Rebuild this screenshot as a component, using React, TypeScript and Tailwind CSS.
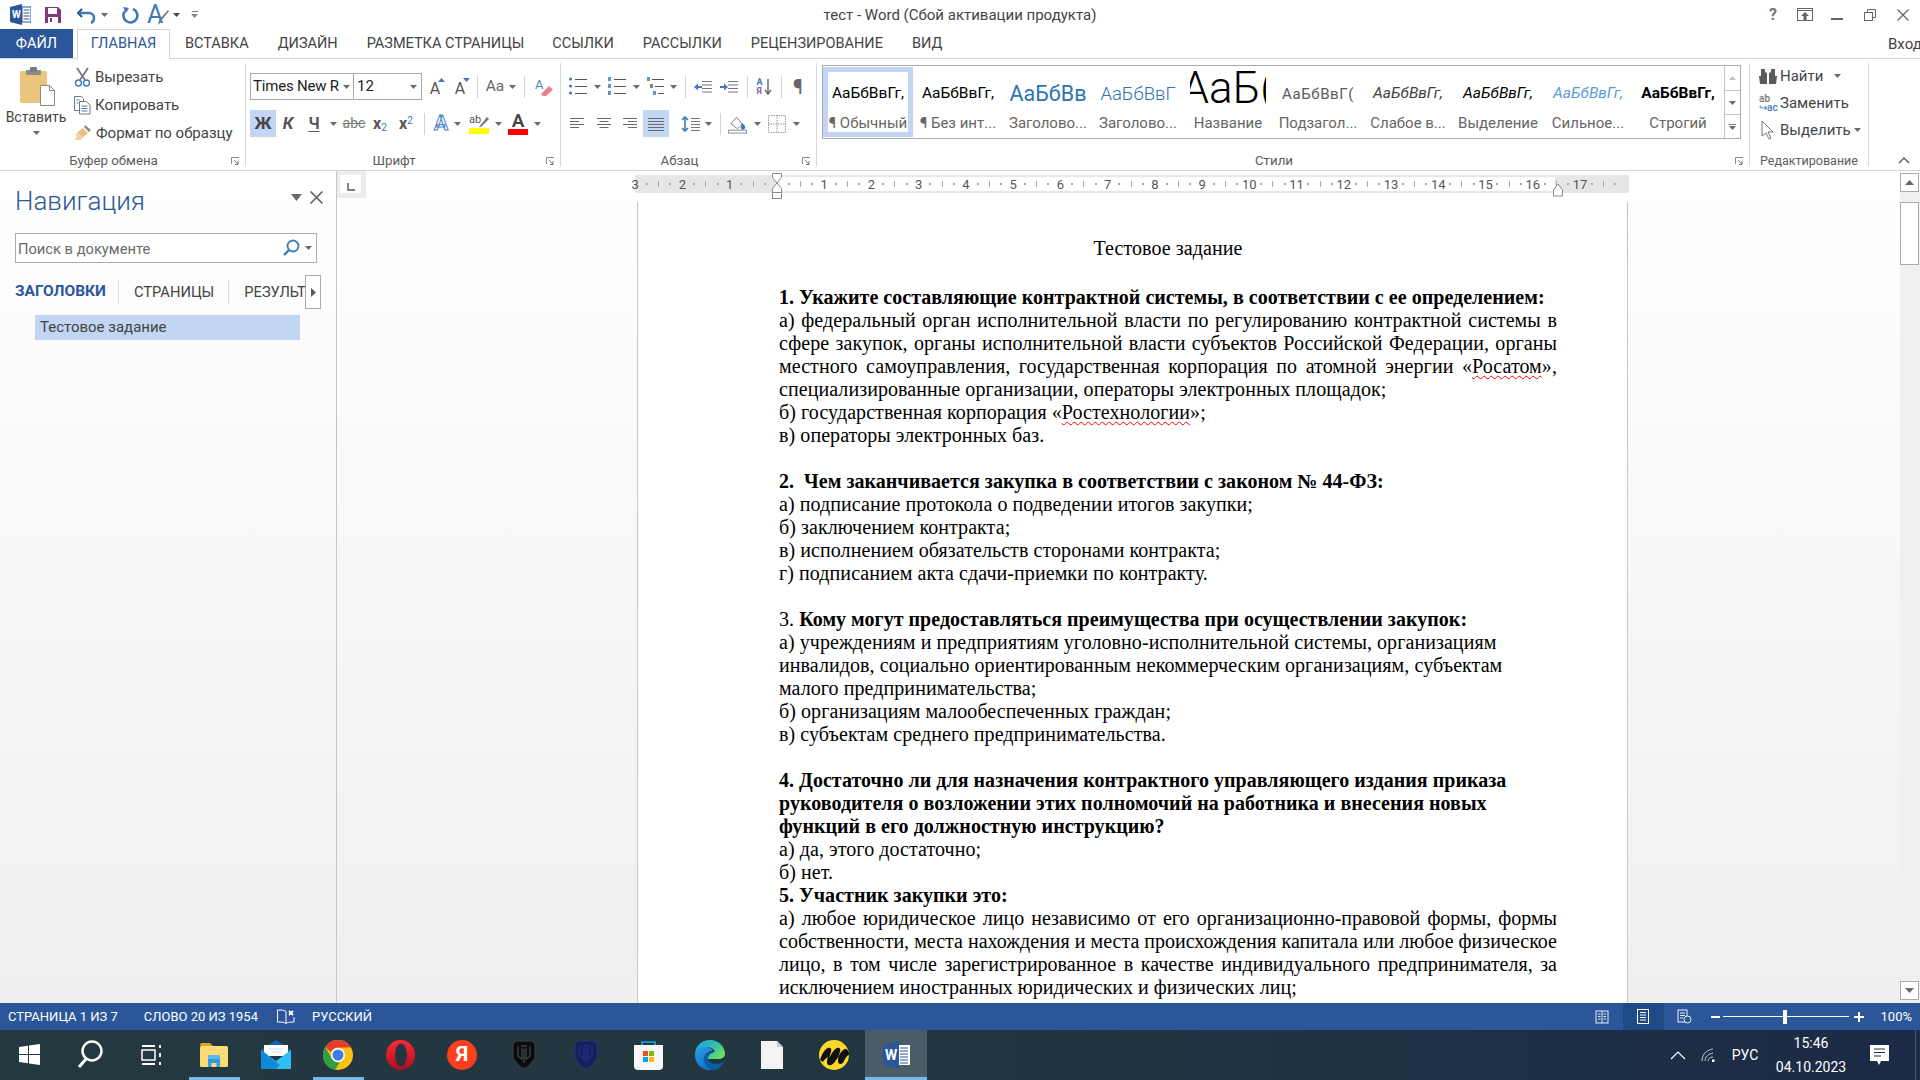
import React from "react";

const Caret = ({ c = "#6a6a6a" }: { c?: string }) => (
  <svg width="7" height="4" viewBox="0 0 7 4"><path d="M0 0h7L3.5 4z" fill={c} /></svg>
);
const CaretCell = ({ cls = "" }: { cls?: string }) => (
  <div className={`flex h-[27px] w-[10px] shrink-0 items-center justify-center ${cls}`}><Caret /></div>
);
const VSep = ({ cls = "" }: { cls?: string }) => <div className={`h-[22px] w-px shrink-0 self-center bg-[#d4d4d4] ${cls}`} />;
const Launcher = () => (
  <svg width="9" height="9" viewBox="0 0 9 9" className="absolute right-[5px] top-[4px]">
    <path d="M.5 7V.5H8" fill="none" stroke="#8a8a8a" /><path d="M3 3l4 4M7 4v3.5H4" fill="none" stroke="#777" />
  </svg>
);

function Group({ w, label, children, noLauncher }: { w: string; label: string; children: React.ReactNode; noLauncher?: boolean }) {
  return (
    <div className={`flex shrink-0 py-[4px] ${w}`}>
      <div className="flex h-[103px] w-full flex-col border-r border-[#d9d9d9]">
        <div className="flex-1 overflow-visible">{children}</div>
        <div className={`relative -mb-[3px] flex h-[16px] items-center justify-center leading-none text-[#5c5c5c] ${noLauncher ? "text-[12.5px]" : "pr-[18px] text-[13.3px]"}`}>
          {label}
          {!noLauncher && <Launcher />}
        </div>
      </div>
    </div>
  );
}

const Cell = ({ w = "w-[20px]", cls = "", children }: { w?: string; cls?: string; children: React.ReactNode }) => (
  <div className={`flex h-[27px] shrink-0 items-center justify-center ${w} ${cls}`}>{children}</div>
);

/* ---- ribbon glyphs ---- */
const Lines = ({ xs, w = 16 }: { xs: number[][]; w?: number }) => (
  <svg width={w} height="16" viewBox={`0 0 ${w} 16`}>
    {xs.map((l, i) => (
      <rect key={i} x={l[0]} y={l[2]} width={l[1]} height="1" fill="#6a6a6a" />
    ))}
  </svg>
);
const Bullets = ({ kind }: { kind: "b" | "n" | "m" }) => (
  <svg width="20" height="19" viewBox="0 0 20 19">
    {[2, 9, 16].map((y, i) => (
      <g key={y}>
        {kind === "b" && <circle cx="2.5" cy={y} r="1.5" fill="#3f79b8" />}
        {kind === "n" && <rect x="1" y={y - 2} width="3" height="4" fill="#3f79b8" opacity=".8" />}
        {kind === "m" && <rect x={1 + i * 3} y={y - 2} width="3" height="4" fill={i === 1 ? "#666" : "#3f79b8"} opacity=".8" />}
        <rect x={kind === "m" ? 6 + i * 3 : 7} y={y} width={kind === "m" ? 12 - i * 3 : 12} height="1" fill="#555" />
      </g>
    ))}
  </svg>
);
const Indent = ({ dir }: { dir: "l" | "r" }) => (
  <svg width="18" height="14" viewBox="0 0 18 14">
    {[1, 4.5, 8, 11.5].map((y) => <rect key={y} x="8" y={y} width="10" height="1" fill="#777" />)}
    <path d={dir === "l" ? "M0 7l4-3.5V6h4v2H4v2.5z" : "M8 7L4 3.5V6H0v2h4v2.5z"} fill="#3f79b8" />
  </svg>
);

function Paste() {
  return (
    <svg width="36" height="40" viewBox="0 0 36 40">
      <rect x="0" y="4" width="27" height="32" rx="1.5" fill="#ecc57c" />
      <rect x="6" y="3" width="15" height="5" fill="#8b8b8b" />
      <rect x="10" y="0" width="7" height="5" rx="1" fill="#7b7b7b" />
      <path d="M20.5 18.5h9l5 5v15h-14z" fill="#fff" stroke="#8b8b8b" />
      <path d="M29.5 18.5v5h5" fill="none" stroke="#8b8b8b" />
    </svg>
  );
}
const Scissors = () => (
  <svg width="17" height="20" viewBox="0 0 17 20">
    <path d="M3 1l8 12M14 1L6 13" stroke="#777" strokeWidth="1.8" fill="none" />
    <circle cx="4.5" cy="16" r="3" fill="none" stroke="#3f79b8" strokeWidth="1.4" />
    <circle cx="12.5" cy="16" r="3" fill="none" stroke="#3f79b8" strokeWidth="1.4" />
  </svg>
);
const Copy = () => (
  <svg width="17" height="20" viewBox="0 0 17 20">
    <path d="M.5 1.5h7l2 2v3M5 15.5H.5z M.5 1.5v14" fill="none" stroke="#777" />
    <path d="M5.5 6.5h7l3.5 3.5v9H5.5z" fill="#fff" stroke="#777" />
    <path d="M7.5 11h6M7.5 13.5h6M7.5 16h6M2.5 5h3M2.5 8h2" stroke="#3f79b8" />
  </svg>
);
const Painter = () => (
  <svg width="18" height="18" viewBox="0 0 18 18">
    <path d="M11 1l6 5-2 2-5-5z" fill="#8a8a8a" />
    <path d="M9 4l5 5-5 4-5-5z" fill="#e8c27e" />
    <path d="M4 8l5 5-3 3-5-1 3-3-2-1z" fill="#efd6a3" stroke="#d0a860" strokeWidth=".4" />
  </svg>
);

function FontAIcon({ up }: { up: boolean }) {
  return (
    <div className="relative flex h-[20px] w-[20px] items-end justify-center text-[16px] leading-none text-[#555]">
      A
      <svg width="7" height="4" viewBox="0 0 7 4" className="absolute right-0 top-[1px]">
        <path d={up ? "M0 4h7L3.5 0z" : "M0 0h7L3.5 4z"} fill="#3f79b8" />
      </svg>
    </div>
  );
}

function Gallery() {
  const items: { s: string; cls: string; label: string }[] = [
    { s: "АаБбВвГг,", cls: "text-[15.5px] text-black", label: "¶ Обычный" },
    { s: "АаБбВвГг,", cls: "text-[15.5px] text-black", label: "¶ Без инт..." },
    { s: "АаБбВв", cls: "text-[21.5px] text-[#2e74b5]", label: "Заголово..." },
    { s: "АаБбВвГ", cls: "text-[18.5px] text-[#2e74b5] font-light", label: "Заголово..." },
    { s: "АаБ(", cls: "text-[44px] font-light text-black -mt-[6px] mb-[6px]", label: "Название" },
    { s: "АаБбВвГ(", cls: "text-[15px] tracking-[.6px] text-[#5a5a5a]", label: "Подзагол..." },
    { s: "АаБбВвГг,", cls: "text-[15.5px] italic text-[#404040]", label: "Слабое в..." },
    { s: "АаБбВвГг,", cls: "text-[15.5px] italic text-black", label: "Выделение" },
    { s: "АаБбВвГг,", cls: "text-[15.5px] italic text-[#5b9bd5]", label: "Сильное..." },
    { s: "АаБбВвГг,", cls: "text-[15.5px] font-bold text-black", label: "Строгий" },
  ];
  return (
    <div className="ml-[5px] mt-[2px] flex h-[74px] w-[919px] border border-[#ababab]">
      <div className="flex w-[901px] pt-[1px]">
        {items.map((it, i) => (
          <div
            key={i}
            className={`flex h-[70px] w-[90px] shrink-0 flex-col items-center pt-[4px] ${i === 0 ? "border-[5px] border-[#c2d5f2]" : "border-[5px] border-transparent"}`}
          >
            <div className={`flex h-[36px] w-[76px] shrink-0 items-center justify-center overflow-hidden whitespace-nowrap leading-none ${it.cls}`}>
              {it.s}
            </div>
            <div className="mt-[2px] flex h-[18px] items-center whitespace-nowrap text-[15px] leading-none text-[#666]">{it.label}</div>
          </div>
        ))}
      </div>
      <div className="flex w-[16px] flex-col border-l border-[#c6c6c6]">
        <div className="flex h-[25px] items-center justify-center border-b border-[#c6c6c6]"><svg width="7" height="4"><path d="M0 4h7L3.5 0z" fill="#c0c0c0" /></svg></div>
        <div className="flex h-[24px] items-center justify-center border-b border-[#c6c6c6]"><Caret /></div>
        <div className="flex flex-1 flex-col items-center justify-center gap-[1px]"><div className="h-px w-[7px] bg-[#777]" /><Caret /></div>
      </div>
    </div>
  );
}

function Ribbon() {
  return (
    <div className="flex h-[112px] shrink-0 border-b border-[#d4d4d4] bg-white text-[15px] text-[#444]">
      <Group w="w-[246px]" label="Буфер обмена">
        <div className="flex">
          <div className="flex w-[72px] flex-col items-center">
            <div className="ml-[4px] mt-[4px]"><Paste /></div>
            <div className="mt-[1px] text-[14px] leading-[18px]">Вставить</div>
            <div className="mt-[5px]"><Caret /></div>
          </div>
          <div className="flex flex-col gap-[6px] pt-[3px]">
            <div className="flex h-[22px] items-center gap-[4px] pl-[2px]"><Scissors /><span>Вырезать</span></div>
            <div className="flex h-[22px] items-center gap-[4px] pl-[2px]"><Copy /><span>Копировать</span></div>
            <div className="flex h-[22px] items-center gap-[4px] pl-[2px]"><Painter /><span>Формат по образцу</span></div>
          </div>
        </div>
      </Group>

      <Group w="w-[315px]" label="Шрифт">
        <div className="flex flex-col gap-[10px] pt-[10px]">
          <div className="flex items-center pl-[4px]">
            <div className="flex h-[27px] w-[104px] items-center justify-between border border-[#ababab] pl-[2px] pr-[3px] text-[15px] leading-none tracking-[-.2px] text-[#222]">
              <span className="w-[87px] overflow-hidden whitespace-nowrap">Times New R</span><Caret />
            </div>
            <div className="-ml-px flex h-[27px] w-[69px] items-center justify-between border border-[#ababab] pl-[3px] pr-[4px] text-[15px] leading-none text-[#222]">
              <span>12</span><Caret />
            </div>
            <Cell w="w-[24px]" cls="ml-[1px]"><FontAIcon up /></Cell>
            <Cell w="w-[24px]" cls="ml-[1px]"><FontAIcon up={false} /></Cell>
            <VSep cls="ml-[5px]" />
            <Cell w="w-[24px]" cls="ml-[5px]"><span className="text-[15.5px] text-[#666]">Aa</span></Cell>
            <CaretCell />
            <VSep cls="ml-[7px]" />
            <Cell w="w-[24px]" cls="ml-[7px]">
              <svg width="20" height="20" viewBox="0 0 20 20">
                <text x="1" y="12" fontSize="13" fill="#5a7fb0" fontFamily="Roboto">A</text>
                <path d="M7 17l8-8 4 3.5-7 6.5H9z" fill="#ec7f8a" />
              </svg>
            </Cell>
          </div>
          <div className="flex items-center pl-[4px]">
            <Cell w="w-[26px]" cls="bg-[#c2d5f2]"><span className="text-[17px] font-bold text-[#444]">Ж</span></Cell>
            <Cell w="w-[24px]"><span className="text-[17px] font-bold italic text-[#555]">К</span></Cell>
            <Cell w="w-[24px]" cls="ml-[2px]"><span className="text-[16px] font-bold leading-[17px] text-[#555] underline underline-offset-2">Ч</span></Cell>
            <CaretCell cls="ml-[2px]" />
            <Cell w="w-[24px]" cls="ml-[4px]"><span className="text-[14px] text-[#777] line-through">abc</span></Cell>
            <Cell w="w-[24px]" cls="ml-[2px]"><span className="text-[16px] font-bold text-[#555]">x<sub className="text-[10px] font-normal text-[#3f79b8]">2</sub></span></Cell>
            <Cell w="w-[24px]" cls="ml-[2px]"><span className="text-[16px] font-bold text-[#555]">x<sup className="text-[10px] font-normal text-[#3f79b8]">2</sup></span></Cell>
            <VSep cls="ml-[6px]" />
            <Cell w="w-[24px]" cls="ml-[4px]"><span className="text-[21px] font-bold leading-none text-white [-webkit-text-stroke:1px_#4a86c5]">A</span></Cell>
            <CaretCell cls="-ml-[1px]" />
            <Cell w="w-[24px]" cls="ml-[5px]">
              <div className="flex flex-col items-center">
                <svg width="20" height="15" viewBox="0 0 20 15">
                  <text x="0" y="10" fontSize="11" fill="#555" fontFamily="Roboto">ab</text>
                  <path d="M10 14l8-10 2 2-8 8z" fill="#777" />
                </svg>
                <div className="h-[6px] w-[20px] bg-[#ffff00]" />
              </div>
            </Cell>
            <CaretCell cls="ml-[2px]" />
            <Cell w="w-[24px]" cls="ml-[3px]">
              <div className="flex flex-col items-center">
                <span className="text-[19px] font-semibold leading-[17px] text-[#444]">A</span>
                <div className="h-[6px] w-[20px] bg-[#ff0000]" />
              </div>
            </Cell>
            <CaretCell cls="ml-[2px]" />
          </div>
        </div>
      </Group>

      <Group w="w-[256px]" label="Абзац">
        <div className="flex flex-col gap-[10px] pt-[10px]">
          <div className="flex items-center">
            <Cell cls="ml-[7px]"><Bullets kind="b" /></Cell>
            <CaretCell cls="ml-[4px]" />
            <Cell cls="ml-[5px]"><Bullets kind="n" /></Cell>
            <CaretCell cls="ml-[4px]" />
            <Cell cls="ml-[5px]"><Bullets kind="m" /></Cell>
            <CaretCell cls="ml-[2px]" />
            <VSep cls="ml-[7px]" />
            <Cell cls="ml-[7px]"><Indent dir="l" /></Cell>
            <Cell cls="ml-[6px]"><Indent dir="r" /></Cell>
            <VSep cls="ml-[8px]" />
            <Cell cls="ml-[6px]">
              <div className="flex items-center gap-[1px]">
                <div className="flex flex-col text-[9px] font-bold leading-[9px]"><span className="text-[#3f79b8]">А</span><span className="text-[#8a5fb0]">Я</span></div>
                <svg width="8" height="18" viewBox="0 0 8 18"><path d="M4 1v15M1 12l3 4 3-4" fill="none" stroke="#666" strokeWidth="1.4" /></svg>
              </div>
            </Cell>
            <VSep cls="ml-[7px]" />
            <Cell cls="ml-[6px]"><span className="text-[20px] leading-none text-[#666]">¶</span></Cell>
          </div>
          <div className="flex items-center">
            <Cell cls="ml-[6px]"><Lines xs={[[1, 14, 2], [1, 9, 5], [1, 14, 8], [1, 9, 11]]} /></Cell>
            <Cell cls="ml-[7px]"><Lines xs={[[1, 14, 2], [3.5, 9, 5], [1, 14, 8], [3.5, 9, 11]]} /></Cell>
            <Cell cls="ml-[6px]"><Lines xs={[[1, 14, 2], [6, 9, 5], [1, 14, 8], [6, 9, 11]]} /></Cell>
            <Cell w="w-[26px]" cls="ml-[3px] bg-[#c2d5f2]"><Lines xs={[[0, 16, 2], [0, 16, 5], [0, 16, 8], [0, 16, 11], [0, 16, 14]]} /></Cell>
            <Cell cls="ml-[12px]">
              <svg width="20" height="18" viewBox="0 0 20 18">
                <path d="M4 2v14M1 5l3-3 3 3M1 13l3 3 3-3" fill="none" stroke="#3f79b8" strokeWidth="1.6" />
                {[3, 6, 9, 12, 15].map((y) => <rect key={y} x="10" y={y} width="9" height="1" fill="#777" />)}
              </svg>
            </Cell>
            <CaretCell cls="ml-[2px]" />
            <VSep cls="ml-[7px]" />
            <Cell cls="ml-[7px]">
              <svg width="21" height="20" viewBox="0 0 21 20">
                <path d="M3 10l6-7 6 7-5 5z" fill="#fff" stroke="#777" />
                <path d="M15 9c2 2 3 3 3 4.5S17 16 15.5 16s-2-1-2-2.500z" fill="#3f79b8" />
                <rect x=".5" y="16.500" width="19" height="3" fill="#fff" stroke="#8a8a8a" />
              </svg>
            </Cell>
            <CaretCell cls="ml-[4px]" />
            <Cell cls="ml-[5px]">
              <svg width="18" height="18" viewBox="0 0 18 18">
                <rect x=".5" y=".5" width="17" height="17" fill="none" stroke="#999" strokeDasharray="1.500 1" />
                <path d="M9 0v18M0 9h18" stroke="#999" strokeDasharray="1.500 1" />
              </svg>
            </Cell>
            <CaretCell cls="ml-[4px]" />
          </div>
        </div>
      </Group>

      <Group w="w-[933px]" label="Стили">
        <Gallery />
      </Group>

      <Group w="w-[119px]" label="Редактирование" noLauncher>
        <div className="flex flex-col gap-[5px] pl-[9px] pt-[2px] text-[15px]">
          <div className="flex h-[22px] items-center gap-[3px]">
            <svg width="18" height="18" viewBox="0 0 18 18">
              <path d="M2 2h4v3l2 1v3H2zM12 2h4v7h-6V6l2-1zM0 9h8v8H1zM10 9h8l-1 8h-7z" fill="#5a5a5a" />
            </svg>
            <span>Найти</span><span className="ml-[8px]"><Caret /></span>
          </div>
          <div className="flex h-[22px] items-center gap-[1px]">
            <div className="flex w-[20px] flex-col text-[10px] font-medium leading-[9px]"><span className="text-[#777]">ab</span><span className="text-[#3f79b8]">↪ac</span></div>
            <span>Заменить</span>
          </div>
          <div className="flex h-[22px] items-center gap-[3px]">
            <svg width="18" height="20" viewBox="0 0 18 20"><path d="M3 1v15l4-3 3 6 2-1-3-6h5z" fill="#fff" stroke="#777" /></svg>
            <span>Выделить</span><Caret />
          </div>
        </div>
      </Group>

      <div className="flex flex-1 items-end justify-end pb-[6px] pr-[10px]">
        <svg width="12" height="7" viewBox="0 0 12 7"><path d="M1 6l5-5 5 5" fill="none" stroke="#555" strokeWidth="1.400" /></svg>
      </div>
    </div>
  );
}

function TitleBar() {
  return (
    <div className="relative flex h-[29px] shrink-0 items-center bg-white">
      <div className="ml-[10px]">
        <svg width="21" height="21" viewBox="0 0 21 21">
          <path d="M0 3l12-3v21L0 18z" fill="#2b579a" />
          <rect x="12" y="3" width="9" height="15" fill="#fff" stroke="#2b579a" />
          <path d="M13.500 6h6M13.500 9h6M13.500 12h6M13.500 15h6" stroke="#2b579a" />
          <text x="2" y="14" fontSize="10" fontWeight="700" fill="#fff" fontFamily="Roboto">W</text>
        </svg>
      </div>
      <svg className="ml-[14px]" width="16" height="16" viewBox="0 0 16 16">
        <path d="M0 0h13l3 3v13H0z" fill="#80397b" />
        <rect x="3" y="1" width="9" height="6" fill="#fff" />
        <rect x="3" y="10" width="10" height="6" fill="#fff" />
        <rect x="5" y="11" width="2" height="4" fill="#80397b" />
      </svg>
      <svg className="ml-[16px]" width="19" height="18" viewBox="0 0 19 18">
        <path d="M5 3l-4 4 4 4" fill="none" stroke="#2b579a" strokeWidth="2.200" />
        <path d="M2 7h10a5 5 0 0 1 5 5c0 2-1 4-3 5" fill="none" stroke="#3f79b8" strokeWidth="2.400" />
      </svg>
      <span className="ml-[5px]"><Caret /></span>
      <svg className="ml-[14px]" width="18" height="18" viewBox="0 0 18 18">
        <path d="M11 3a7 7 0 1 1-8 2" fill="none" stroke="#3f79b8" strokeWidth="2.600" />
        <path d="M1 1l6 1-3 5z" fill="#3f79b8" />
      </svg>
      <div className="relative ml-[7px] flex h-[24px] w-[20px] items-center text-[25px] leading-none text-[#3f79b8]">
        A
        <svg width="12" height="16" viewBox="0 0 12 16" className="absolute -right-[2px] bottom-[1px]"><path d="M11 0l1 1-8 10-2-1z" fill="#777" /><path d="M2 10l2 2-3 3z" fill="#3f79b8" /></svg>
      </div>
      <span className="ml-[6px]"><Caret c="#444" /></span>
      <div className="ml-[11px] flex flex-col items-center gap-[2px]"><div className="h-px w-[6px] bg-[#777]" /><Caret c="#888" /></div>
      <div className="absolute inset-x-0 top-[5px] text-center text-[15px] leading-[20px] text-[#444]">тест - Word (Сбой активации продукта)</div>
      <div className="relative ml-auto flex items-center">
        <span className="w-[14px] text-center text-[16px] font-bold leading-none text-[#777]">?</span>
        <svg className="ml-[17px]" width="16" height="13" viewBox="0 0 16 13">
          <rect x=".5" y=".5" width="15" height="12" fill="none" stroke="#666" /><path d="M0 2.500h16" stroke="#666" /><path d="M8 4l4 4H9.500v4h-3V8H4z" fill="#666" />
        </svg>
        <div className="ml-[18px] mt-[8px] h-[2px] w-[12px] bg-[#666]" />
        <svg className="ml-[21px]" width="12" height="12" viewBox="0 0 12 12">
          <path d="M3.500 3V.5h8v8H9" fill="none" stroke="#666" /><rect x=".5" y="3.500" width="8" height="8" fill="none" stroke="#666" />
        </svg>
        <svg className="ml-[21px] mr-[11px]" width="12" height="12" viewBox="0 0 12 12"><path d="M.5.5l11 11M11.500.5l-11 11" stroke="#666" strokeWidth="1.300" /></svg>
      </div>
    </div>
  );
}

function Tabs() {
  const t: [string, string][] = [
    ["ВСТАВКА", "ml-[15px]"],
    ["ДИЗАЙН", "ml-[29px]"],
    ["РАЗМЕТКА СТРАНИЦЫ", "ml-[29px]"],
    ["ССЫЛКИ", "ml-[28px]"],
    ["РАССЫЛКИ", "ml-[29px]"],
    ["РЕЦЕНЗИРОВАНИЕ", "ml-[29px]"],
    ["ВИД", "ml-[29px]"],
  ];
  return (
    <div className="flex h-[30px] shrink-0 items-stretch border-b border-[#d4d4d4] bg-white text-[14.5px] leading-none text-[#444]">
      <div className="flex w-[73px] items-center justify-center bg-[#2b579a] pt-[1px] text-white">ФАЙЛ</div>
      <div className="relative ml-[4px] flex h-[30px] w-[93px] items-center justify-center border-x border-t border-[#d4d4d4] bg-white text-[#2b579a]">ГЛАВНАЯ</div>
      {t.map(([s, m]) => (
        <div key={s} className={`flex items-center whitespace-nowrap pt-[1px] ${m}`}>{s}</div>
      ))}
      <div className="ml-auto flex w-[32px] items-center overflow-hidden whitespace-nowrap pt-[1px] text-[15px]">Вход</div>
    </div>
  );
}

function Nav() {
  return (
    <div className="flex w-[337px] shrink-0 flex-col border-r border-[#c6c6c6]">
      <div className="flex h-[62px] items-center pb-[2px] pl-[15px] pr-[13px]">
        <span className="text-[26px] font-light leading-none text-[#2b579a]">Навигация</span>
        <span className="ml-auto mr-[8px] mt-[-8px]"><svg width="11" height="7" viewBox="0 0 11 7"><path d="M0 0h11L5.500 7z" fill="#6a6a6a" /></svg></span>
        <svg className="mt-[-8px]" width="13" height="13" viewBox="0 0 13 13"><path d="M.5.5l12 12M12.500.5l-12 12" stroke="#5a5a5a" strokeWidth="1.500" /></svg>
      </div>
      <div className="ml-[15px] flex h-[30px] w-[302px] items-center border border-[#ababab] bg-white pl-[2px] pr-[4px] pt-[2px] text-[14.7px] leading-none text-[#6a6a6a]">
        <span>Поиск в документе</span>
        <svg className="ml-auto -mt-[2px]" width="18" height="18" viewBox="0 0 18 18"><circle cx="11" cy="7" r="5.500" fill="none" stroke="#3f79b8" strokeWidth="1.800" /><path d="M7 11l-5 5" stroke="#3f79b8" strokeWidth="2.400" /></svg>
        <span className="ml-[5px] -mt-[2px]"><Caret /></span>
      </div>
      <div className="ml-[15px] mt-[12px] flex h-[34px] items-center text-[14.7px] leading-none text-[#444]">
        <span className="text-[15.5px] font-bold text-[#2b579a]">ЗАГОЛОВКИ</span>
        <div className="ml-[12px] h-[24px] w-px bg-[#dcdcdc]" />
        <span className="ml-[15px]">СТРАНИЦЫ</span>
        <div className="ml-[14px] h-[24px] w-px bg-[#dcdcdc]" />
        <span className="ml-[15px] w-[65px] shrink-0 overflow-hidden whitespace-nowrap">РЕЗУЛЬТАТЫ</span>
        <div className="relative -ml-[4px] flex h-[34px] w-[16px] items-center justify-center border border-[#ababab] bg-white">
          <svg width="5" height="9" viewBox="0 0 5 9"><path d="M0 0l5 4.500L0 9z" fill="#5a5a5a" /></svg>
        </div>
      </div>
      <div className="ml-[35px] mt-[6px] flex h-[25px] w-[265px] items-center bg-[#c2d5f2] pl-[5px] text-[15px] leading-none text-[#444]">Тестовое задание</div>
    </div>
  );
}

function Ruler() {
  const cells: (number | string)[] = [3, 2, 1, "", 1, 2, 3, 4, 5, 6, 7, 8, 9, 10, 11, 12, 13, 14, 15, 16, 17];
  const Slot = ({ children }: { children?: React.ReactNode }) => (
    <div className="flex w-[11.8125px] shrink-0"><span className="flex w-0 justify-center whitespace-nowrap">{children}</span></div>
  );
  const Dot = () => <span className="h-[2px] w-[2px] shrink-0 self-center bg-[#a8a8a8]" />;
  const Tick = () => <span className="h-[6px] w-px shrink-0 self-center bg-[#a8a8a8]" />;
  return (
    <div className="relative ml-[269px] mt-[4px] h-[18px] w-[994px] shrink-0">
      <div className="flex h-[18px]">
        <div className="w-[142px] bg-[#e6e6e6]" />
        <div className="w-[778px] border-y-2 border-[#e6e6e6] bg-white" />
        <div className="w-[74px] bg-[#e6e6e6]" />
      </div>
      <div className="absolute left-[-23.6px] top-0 flex h-[18px] items-center text-[13px] leading-none text-[#555]">
        {cells.map((n, i) => (
          <div key={i} className="flex h-[18px] w-[47.25px] shrink-0 items-center">
            <Slot>{i > 0 && <Tick />}</Slot>
            <Slot>{i > 0 && <Dot />}</Slot>
            <Slot><span>{n}</span></Slot>
            <Slot><Dot /></Slot>
          </div>
        ))}
        <Slot><Tick /></Slot>
        <Slot><Dot /></Slot>
      </div>
      <svg className="absolute left-[135px] top-[-2px]" width="14" height="28" viewBox="0 0 14 28">
        <path d="M2.500.5h9v4L7 10 2.500 4.500z" fill="#fff" stroke="#8a8a8a" />
        <path d="M7 10l4.500 5.500v4h-9v-4z" fill="#fff" stroke="#8a8a8a" />
        <rect x="2.500" y="19.500" width="9" height="6" fill="#fff" stroke="#8a8a8a" />
      </svg>
      <svg className="absolute left-[916px] top-[8px]" width="14" height="15" viewBox="0 0 14 15">
        <path d="M7 1l4.500 6v6h-9V7z" fill="#fff" stroke="#8a8a8a" />
      </svg>
    </div>
  );
}

const Err = ({ children }: { children: React.ReactNode }) => (
  <span className="underline decoration-[#ff0000] decoration-wavy decoration-1 underline-offset-[2px]">{children}</span>
);

function Page() {
  return (
    <div className="ml-[300px] h-[801px] w-[991px] overflow-hidden border-x border-[#c6c6c6] bg-white pl-[141px] pr-[70px] pt-[35px] font-['Liberation_Serif',serif] text-[20px] leading-[23px] tracking-[.07px] text-black [&_b]:tracking-[.03px] [&_.font-bold]:tracking-[.03px]">
      <p className="mb-[26px] text-center">Тестовое задание</p>
      <p className="font-bold">1. Укажите составляющие контрактной системы, в соответствии с ее определением:</p>
      <p className="text-justify">а) федеральный орган исполнительной власти по регулированию контрактной системы в сфере закупок, органы исполнительной власти субъектов Российской Федерации, органы местного самоуправления, государственная корпорация по атомной энергии «<Err>Росатом</Err>», специализированные организации, операторы электронных площадок;</p>
      <p>б) государственная корпорация «<Err>Ростехнологии</Err>»;</p>
      <p>в) операторы электронных баз.</p>
      <p className="h-[23px]" />
      <p className="font-bold whitespace-pre">2.  Чем заканчивается закупка в соответствии с законом № 44-ФЗ:</p>
      <p>а) подписание протокола о подведении итогов закупки;</p>
      <p>б) заключением контракта;</p>
      <p>в) исполнением обязательств сторонами контракта;</p>
      <p>г) подписанием акта сдачи-приемки по контракту.</p>
      <p className="h-[23px]" />
      <p>3. <b>Кому могут предоставляться преимущества при осуществлении закупок:</b></p>
      <p>а) учреждениям и предприятиям уголовно-исполнительной системы, организациям инвалидов, социально ориентированным некоммерческим организациям, субъектам малого предпринимательства;</p>
      <p>б) организациям малообеспеченных граждан;</p>
      <p>в) субъектам среднего предпринимательства.</p>
      <p className="h-[23px]" />
      <p className="font-bold">4. Достаточно ли для назначения контрактного управляющего издания приказа руководителя о возложении этих полномочий на работника и внесения новых функций в его должностную инструкцию?</p>
      <p>а) да, этого достаточно;</p>
      <p>б) нет.</p>
      <p className="font-bold">5. Участник закупки это:</p>
      <p className="text-justify tracking-normal">а) любое юридическое лицо независимо от его организационно-правовой формы, формы собственности, места нахождения и места происхождения капитала или любое физическое лицо, в том числе зарегистрированное в качестве индивидуального предпринимателя, за исключением иностранных юридических и физических лиц;</p>
    </div>
  );
}

function Scrollbar() {
  return (
    <div className="flex w-[20px] shrink-0 flex-col pt-[2px]">
      <div className="flex h-[19px] w-[19px] items-center justify-center border border-[#ababab] bg-white"><svg width="9" height="5"><path d="M0 5h9L4.500 0z" fill="#666" /></svg></div>
      <div className="flex flex-1 flex-col bg-[#f0f0f0] pt-[10px]">
        <div className="h-[63px] w-[19px] border border-[#ababab] bg-white" />
      </div>
      <div className="flex h-[19px] w-[19px] items-center justify-center border border-[#ababab] bg-white"><svg width="9" height="5"><path d="M0 0h9L4.500 5z" fill="#666" /></svg></div>
      <div className="h-[3px]" />
    </div>
  );
}

function StatusBar() {
  return (
    <div className="flex h-[27px] shrink-0 items-center bg-[#2b579a] text-[13px] leading-none text-white">
      <span className="ml-[8px]">СТРАНИЦА 1 ИЗ 7</span>
      <span className="ml-[26px]">СЛОВО 20 ИЗ 1954</span>
      <svg className="ml-[19px]" width="18" height="15" viewBox="0 0 18 15"><path d="M9 2.500C7 1 4 1 .5 1v12c3.500 0 6.500 0 8.500 1.500V2.500z" fill="none" stroke="#fff" /><path d="M12 2l4 4M16 2l-4 4" stroke="#fff" strokeWidth="1.800" /><path d="M9 14.500c1-.8 3-1.500 8-1.500V8" fill="none" stroke="#fff" /></svg>
      <span className="ml-[17px]">РУССКИЙ</span>
      <svg className="ml-auto" width="14" height="14" viewBox="0 0 14 14"><rect x="1" y="1" width="12" height="12" fill="none" stroke="#e8eef7" /><path d="M7 1v12M3 4h2.500M3 6.500h2.500M3 9h2.500M8.500 4H11M8.500 6.500H11M8.500 9H11" stroke="#e8eef7" /></svg>
      <div className="ml-[14px] flex h-[27px] w-[41px] items-center justify-center bg-[#1e4a86]">
        <svg width="12" height="15" viewBox="0 0 12 15"><rect x=".5" y=".5" width="11" height="14" fill="none" stroke="#fff" /><path d="M3 3.500h6M3 6h6M3 8.500h6M3 11h6" stroke="#fff" /></svg>
      </div>
      <svg className="ml-[13px]" width="15" height="15" viewBox="0 0 15 15"><rect x="1" y="1" width="9" height="12" fill="none" stroke="#e8eef7" /><path d="M3 4h5M3 6.500h5M3 9h3" stroke="#e8eef7" /><circle cx="10.500" cy="10.500" r="3.500" fill="#2b579a" stroke="#e8eef7" /></svg>
      <div className="ml-[19px] h-[2px] w-[9px] bg-white" />
      <div className="relative ml-[3px] flex h-[14px] w-[126px] items-center">
        <div className="h-px w-full bg-white" />
        <div className="absolute left-[60px] top-0 h-[14px] w-[4px] bg-white" />
      </div>
      <svg className="ml-[3px]" width="14" height="14" viewBox="0 0 14 14"><path d="M7 2v10M2 7h10" stroke="#fff" strokeWidth="2" /></svg>
      <span className="ml-[15px] mr-[8px] text-[13px]">100%</span>
    </div>
  );
}

/* ---- taskbar logos ---- */
const Folder = () => (
  <svg width="28" height="26" viewBox="0 0 28 26">
    <path d="M0 3a2 2 0 0 1 2-2h8l3 3h-13z" fill="#e0a31e" />
    <rect y="4" width="28" height="21" rx="1.500" fill="#fbdc75" />
    <path d="M8 25v-9h12v9h-3.500v-4h-5v4z" fill="#2f9fe0" />
    <rect x="8" y="13" width="12" height="4" fill="#59b9ee" />
  </svg>
);
const Mail = () => (
  <svg width="30" height="29" viewBox="0 0 30 29">
    <path d="M0 10L15 0l15 10v2H0z" fill="#0e63b4" />
    <path d="M3 5h24v11H3z" fill="#fff" />
    <path d="M0 10l15 11 15-11v18a1 1 0 0 1-1 1H1a1 1 0 0 1-1-1z" fill="#31bdf3" />
    <path d="M0 10l19 15-4 4H1a1 1 0 0 1-1-1z" fill="#0f8ad8" />
    <path d="M8 9h14M10 12h10" stroke="#c9dff2" strokeWidth="1.200" />
  </svg>
);
const Chrome = () => (
  <svg width="30" height="30" viewBox="0 0 30 30">
    <circle cx="15" cy="15" r="15" fill="#fbc116" />
    <path d="M15 0a15 15 0 0 1 13 7.500H15a7.500 7.500 0 0 0-7 4.500L2.300 7A15 15 0 0 1 15 0z" fill="#e33b2e" />
    <path d="M2.300 7L8.800 18.500a7.500 7.500 0 0 0 7.700 3.900L12 30A15 15 0 0 1 2.300 7z" fill="#2f9e44" />
    <circle cx="15" cy="15" r="7" fill="#fff" />
    <circle cx="15" cy="15" r="5.500" fill="#3b7de8" />
  </svg>
);
const Opera = () => (
  <svg width="29" height="30" viewBox="0 0 29 30">
    <defs><linearGradient id="op" x1="0" y1="0" x2="0" y2="1"><stop offset="0" stopColor="#ff2a33" /><stop offset="1" stopColor="#b00c1f" /></linearGradient></defs>
    <ellipse cx="14.500" cy="15" rx="14.500" ry="15" fill="url(#op)" />
    <ellipse cx="15" cy="15" rx="6" ry="11.500" fill="#213740" />
  </svg>
);
const Shield = ({ c, s }: { c: string; s: string }) => (
  <svg width="24" height="30" viewBox="0 0 24 30">
    <path d="M4 1h16l3 3v14l-6 8-5 3-5-3-6-8V4z" fill={c} stroke={s} strokeWidth="1" />
    <path d="M6 6v10l4 3V8M18 6v10l-4 3V8M9 6h6" fill="none" stroke={s} strokeWidth="1.400" />
    <path d="M12 9v14" stroke={s} strokeWidth="1.500" />
  </svg>
);
const Store = () => (
  <svg width="29" height="30" viewBox="0 0 29 30">
    <path d="M8 6V2h13v4" fill="none" stroke="#19a9e5" strokeWidth="1.600" />
    <path d="M0 5h29v21a4 4 0 0 1-4 4H4a4 4 0 0 1-4-4z" fill="#f7f7f7" />
    <rect x="9" y="11" width="5" height="5" fill="#f25022" /><rect x="15" y="11" width="5" height="5" fill="#7fba00" />
    <rect x="9" y="17" width="5" height="5" fill="#00a4ef" /><rect x="15" y="17" width="5" height="5" fill="#ffb900" />
  </svg>
);
const Edge = () => (
  <svg width="30" height="30" viewBox="0 0 30 30">
    <defs>
      <linearGradient id="eg" x1="0" y1="0" x2="1" y2=".7"><stop offset="0" stopColor="#1a9ad8" /><stop offset=".6" stopColor="#35c1b0" /><stop offset="1" stopColor="#6ee05a" /></linearGradient>
      <linearGradient id="eb" x1="0" y1="0" x2=".6" y2="1"><stop offset="0" stopColor="#2aa0ea" /><stop offset="1" stopColor="#0f70c8" /></linearGradient>
    </defs>
    <path d="M15 0c9 0 15 7 15 14 0 3-3 5-7 5H13c0-5 4-7 7-7-1-3-4-5-8-5C6 7 1 11 0 15 0 6 6 0 15 0z" fill="url(#eg)" />
    <path d="M0 15c1-6 6-9 12-8 3 0 5 2 6 4-5 0-9 3-9 8 0 5 4 9 9 11-1 .3-2 .3-3 .3C6 30 0 23 0 15z" fill="url(#eb)" />
    <path d="M9 19c0-4 3-8 9-8-3 1-5 3-5 7 0 4 4 6 8 6 3 0 6-1 8-3-2 5-6 9-11 9-5-2-9-6-9-11z" fill="#0b5fa8" />
  </svg>
);
const FileI = () => (
  <svg width="22" height="28" viewBox="0 0 22 28">
    <path d="M0 0h16l6 6v22H0z" fill="#f4f4f4" />
    <path d="M16 0v6h6z" fill="#c9c9c9" />
  </svg>
);
const Yellow = () => (
  <svg width="30" height="30" viewBox="0 0 30 30">
    <circle cx="15" cy="15" r="15" fill="#fdd92b" />
    <path d="M1 20C4 11 8 7 11 8c3 1 0 6-1 10 4-7 7-11 10-10 3 1 0 6-1 9 3-5 6-9 8-8 2 .5 3 3 3 6-2 0-4 4-6 8-3 2-5 1-5-2 0-2 0-3 1-5-3 4-5 8-8 9-3 1-4-1-4-3 0-2 .5-4 1-5-2 1-4 3-5 5z" fill="#111" />
  </svg>
);
const WordBig = () => (
  <svg width="27" height="28" viewBox="0 0 27 28">
    <path d="M0 4L16 0v28L0 24z" fill="#2b579a" />
    <rect x="16" y="4" width="11" height="20" fill="#fff" />
    <path d="M17 7h8M17 10h8M17 13h8M17 16h8M17 19h8M17 22h8" stroke="#2b579a" strokeWidth="1.200" />
    <text x="2" y="19" fontSize="14" fontWeight="700" fill="#fff" fontFamily="Roboto">W</text>
  </svg>
);

function TB({ children, active, selected, w = "w-[62px]" }: { children: React.ReactNode; active?: boolean; selected?: boolean; w?: string }) {
  return (
    <div className={`relative flex h-[50px] shrink-0 items-center justify-center pb-[1px] ${w} ${selected ? "bg-[#4b5c66]" : ""}`}>
      {children}
      {active && <div className={`absolute bottom-0 h-[3px] bg-[#76b9ed] ${selected ? "inset-x-0" : "left-[6px] w-[51px]"}`} />}
    </div>
  );
}

function Taskbar() {
  return (
    <div className="flex h-[50px] shrink-0 items-center bg-gradient-to-r from-[#23383f] via-[#213640] to-[#1b2a46] text-white">
      <TB w="w-[59px]">
        <svg width="21" height="21" viewBox="0 0 21 21"><path d="M0 3l9-1.300V10H0zM10 1.500L21 0v10H10zM0 11h9v8.300L0 18zM10 11h11v10l-11-1.500z" fill="#fff" /></svg>
      </TB>
      <TB>
        <svg width="28" height="29" viewBox="0 0 28 29"><circle cx="16" cy="11" r="9.500" fill="none" stroke="#fff" strokeWidth="2.400" /><path d="M10 19l-7 8" stroke="#fff" strokeWidth="3" /></svg>
      </TB>
      <TB>
        <svg width="22" height="24" viewBox="0 0 22 24">
          <rect x="1" y="7" width="13" height="10" fill="none" stroke="#fff" strokeWidth="1.500" />
          <path d="M1 3h13M1 21h13M19 2v3M19 10v4M19 19v3" stroke="#fff" strokeWidth="1.800" />
        </svg>
      </TB>
      <TB active><Folder /></TB>
      <TB><Mail /></TB>
      <TB active><Chrome /></TB>
      <TB><Opera /></TB>
      <TB>
        <div className="flex h-[30px] w-[30px] items-center justify-center rounded-full bg-[#fc3f1d] text-[21px] font-bold leading-none text-white">Я</div>
      </TB>
      <TB><Shield c="#0c0c0c" s="#3a3f42" /></TB>
      <TB><Shield c="#14205a" s="#1f2f80" /></TB>
      <TB><Store /></TB>
      <TB><Edge /></TB>
      <TB><FileI /></TB>
      <TB><Yellow /></TB>
      <TB active selected><WordBig /></TB>

      <div className="ml-auto flex h-[24px] w-[24px] items-center justify-center">
        <svg width="16" height="10" viewBox="0 0 16 10"><path d="M1 9l7-7 7 7" fill="none" stroke="#fff" strokeWidth="1.200" /></svg>
      </div>
      <div className="ml-[6px] flex h-[24px] w-[24px] items-center justify-center">
        <svg width="16" height="16" viewBox="0 0 16 16"><path d="M2 14C2 8 6 3 13 2M5 14c0-4 3-7 8-8M8 14c0-2 2-4 5-4" fill="none" stroke="#c6ccd2" strokeWidth="1" /><rect x="12" y="12.500" width="2.500" height="2.500" fill="#fff" /></svg>
      </div>
      <div className="ml-[5px] w-[40px] text-center text-[14px] leading-none">РУС</div>
      <div className="ml-[11px] flex w-[70px] flex-col items-center text-[14px] leading-[24px]">
        <span>15:46</span><span>04.10.2023</span>
      </div>
      <div className="ml-[21px] flex h-[24px] w-[24px] items-center justify-center">
        <svg width="19" height="21" viewBox="0 0 19 21"><path d="M0 0h19v16H11l-2 4-2-4H0z" fill="#fff" /><path d="M4 4h11M4 7.500h11M4 11h7" stroke="#213040" strokeWidth="1.200" /></svg>
      </div>
      <div className="ml-[24px] h-[50px] w-px bg-[#4c5a66]" />
      <div className="w-[4px]" />
    </div>
  );
}

export default function App() {
  return (
    <div className="flex h-[1080px] w-[1920px] flex-col overflow-hidden bg-white font-['Roboto',sans-serif]">
      <TitleBar />
      <Tabs />
      <Ribbon />
      <div className="flex min-h-0 flex-1 bg-gradient-to-b from-white to-[#efefef]">
        <Nav />
        <div className="flex min-w-0 flex-1 flex-col">
          <div className="flex h-[31px] shrink-0">
            <div className="flex h-[27px] w-[29px] shrink-0 bg-[#ececec] pl-[3px] pt-[4px]">
              <div className="flex h-[18px] w-[21px] items-end justify-center bg-white pb-[2px]">
                <svg width="8" height="8" viewBox="0 0 8 8"><path d="M1 0v7h7" fill="none" stroke="#555" strokeWidth="1.400" /></svg>
              </div>
            </div>
            <Ruler />
          </div>
          <Page />
        </div>
        <Scrollbar />
      </div>
      <StatusBar />
      <Taskbar />
    </div>
  );
}
